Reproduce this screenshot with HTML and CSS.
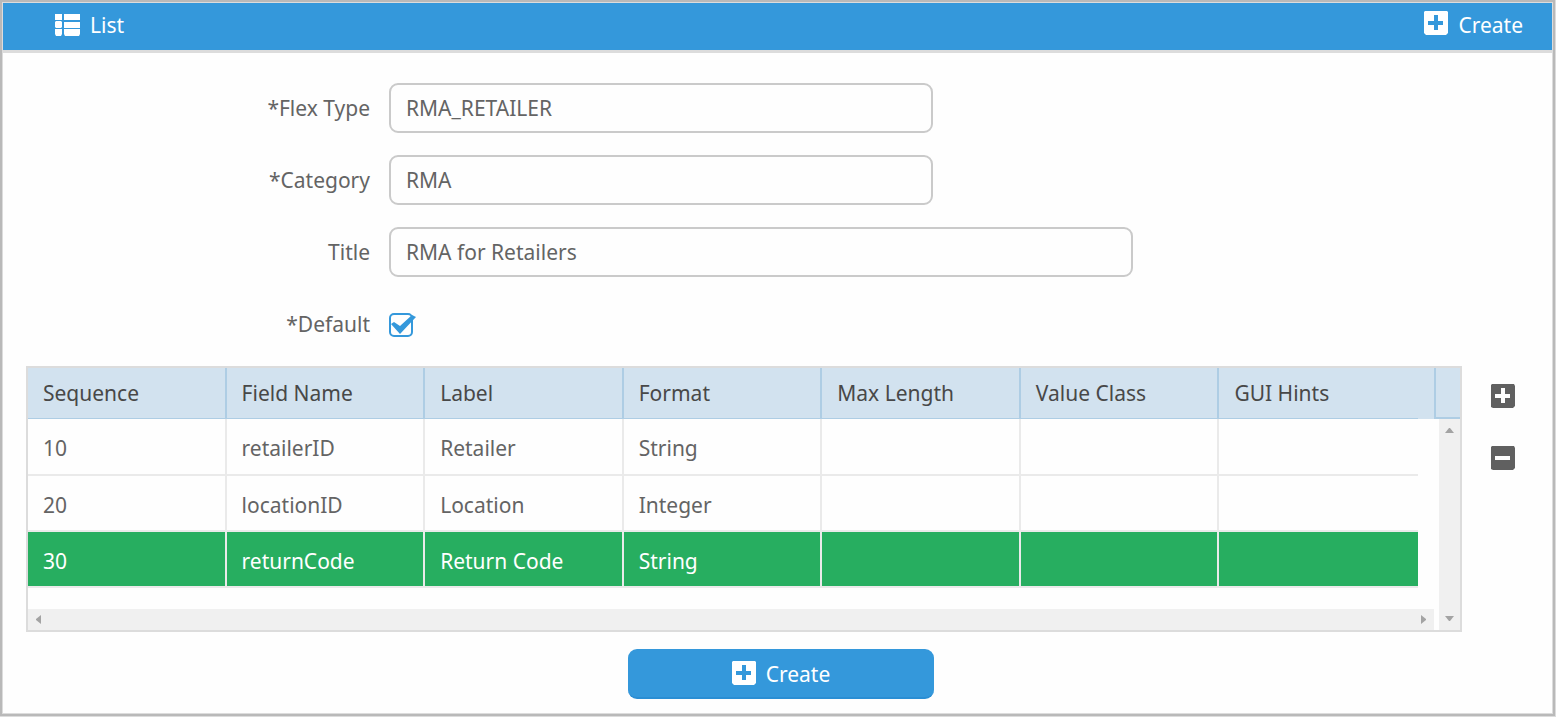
FILE: index.html
```html
<!DOCTYPE html>
<html lang="en">
<head>
<meta charset="utf-8">
<title>Flex Type</title>
<link rel="stylesheet" href="styles.css">
</head>
<body>
<div class="frame">
  <div class="page">
    <header class="toolbar">
      <button class="tool" type="button">
        <svg class="icon-list" width="25" height="22" viewBox="0 0 25 22" fill="currentColor" aria-hidden="true">
          <path d="M0 0h7v6H0zM9 0h16v6H9zM1 7h5l1 1v5l-1 1H1l-1-1V8zM9 8h16v6H9zM0 15h7v5l-1 2H1l-1-2zM9 15h16v5l-1 2H10l-1-2z"/>
        </svg>
        <span>List</span>
      </button>
      <button class="tool" type="button">
        <svg class="icon-box" width="24" height="24" viewBox="0 0 24 24" fill="currentColor" fill-rule="evenodd" aria-hidden="true">
          <path d="M1 0h22l1 1v21l-2 2H2l-2-2V1zM10 4v6H4v4h6v5h4v-5h5v-4h-5V4z"/>
        </svg>
        <span>Create</span>
      </button>
    </header>

    <form class="content">
      <div class="field">
        <label class="field-label" for="flex-type">*Flex Type</label>
        <input class="text-box" id="flex-type" type="text" value="RMA_RETAILER">
      </div>
      <div class="field">
        <label class="field-label" for="category">*Category</label>
        <input class="text-box" id="category" type="text" value="RMA">
      </div>
      <div class="field">
        <label class="field-label" for="title">Title</label>
        <input class="text-box text-box-wide" id="title" type="text" value="RMA for Retailers">
      </div>
      <div class="field">
        <label class="field-label" for="default">*Default</label>
        <div class="check">
          <input class="check-input" id="default" type="checkbox" checked>
          <svg class="check-mark" width="28" height="24" viewBox="0 0 28 24" fill="#3498db" aria-hidden="true">
            <path d="M2 11l3-2 6 4L23 2l4 2-16 17z"/>
          </svg>
        </div>
      </div>

      <div class="grid-row">
        <div class="grid-panel">
          <div class="grid-main">
            <table class="grid">
              <thead>
                <tr><th>Sequence</th><th>Field Name</th><th>Label</th><th>Format</th><th>Max Length</th><th>Value Class</th><th>GUI Hints</th></tr>
              </thead>
              <tbody>
                <tr><td>10</td><td>retailerID</td><td>Retailer</td><td>String</td><td></td><td></td><td></td></tr>
                <tr><td>20</td><td>locationID</td><td>Location</td><td>Integer</td><td></td><td></td><td></td></tr>
                <tr class="selected"><td>30</td><td>returnCode</td><td>Return Code</td><td>String</td><td></td><td></td><td></td></tr>
              </tbody>
            </table>
          </div>
          <div class="head-filler"></div>
          <div class="head-corner"></div>
          <div class="scroll-v">
            <svg width="9" height="5" viewBox="0 0 9 5" fill="#a3a3a3" aria-hidden="true"><path d="M0 5l4-5h1l4 5z"/></svg>
            <svg width="9" height="5" viewBox="0 0 9 5" fill="#a3a3a3" aria-hidden="true"><path d="M0 0h9L5 5H4z"/></svg>
          </div>
          <div class="scroll-h">
            <svg width="5" height="9" viewBox="0 0 5 9" fill="#a3a3a3" aria-hidden="true"><path d="M5 0v9L0 5V4z"/></svg>
            <svg width="5" height="9" viewBox="0 0 5 9" fill="#a3a3a3" aria-hidden="true"><path d="M0 0l5 4v1L0 9z"/></svg>
          </div>
        </div>
        <div class="row-tools">
          <button class="row-tool" type="button" aria-label="Add row">
            <svg width="24" height="24" viewBox="0 0 24 24" fill="currentColor" fill-rule="evenodd" aria-hidden="true">
              <path d="M1 0h22l1 2v20l-2 2H2l-2-1V1zM10 4v6H4v4h6v5h4v-5h5v-4h-5V4z"/>
            </svg>
          </button>
          <button class="row-tool" type="button" aria-label="Remove row">
            <svg width="24" height="24" viewBox="0 0 24 24" fill="currentColor" fill-rule="evenodd" aria-hidden="true">
              <path d="M1 0h22l1 2v20l-2 2H2l-2-1V1zM4 10v4h15v-4z"/>
            </svg>
          </button>
        </div>
      </div>

      <div class="actions">
        <button class="primary" type="button">
          <svg class="icon-box" width="24" height="24" viewBox="0 0 24 24" fill="currentColor" fill-rule="evenodd" aria-hidden="true">
            <path d="M1 0h22l1 1v21l-2 2H2l-2-2V1zM10 4v6H4v4h6v5h4v-5h5v-4h-5V4z"/>
          </svg>
          <span>Create</span>
        </button>
      </div>
    </form>
  </div>
</div>
</body>
</html>
```
FILE: styles.css
```css
* { box-sizing: border-box; }

body {
  margin: 0;
  background: #dcdcdc;
  color: #646464;
  font-family: "Noto Sans", "Open Sans", sans-serif;
  font-size: 21px;
  line-height: 30px;
}

button, input { font: inherit; color: inherit; }

.frame {
  display: flex;
  min-height: 100vh;
  padding: 0 1px 1px 0;
}

.page {
  flex: 1;
  min-width: 0;
  border: 2px solid #b9b9b9;
  outline: 1px solid #dcdcdc;
  outline-offset: -3px;
  padding: 1px;
  background: #fefefe;
}

.toolbar {
  display: flex;
  justify-content: space-between;
  height: 50px;
  padding: 0 29px 0 52px;
  border-bottom: 3px solid #dcdcdc;
  background: #3498db;
  color: #fff;
}

.tool {
  display: flex;
  align-items: center;
  gap: 10px;
  padding: 0 0 4px;
  border: 0;
  background: none;
}

.icon-box { margin-bottom: 3px; }

.content { padding: 30px 0 14px; }

.field {
  display: grid;
  grid-template-columns: 386fr 544fr 200fr 419fr;
  align-items: center;
  height: 50px;
  margin-bottom: 22px;
}

.field-label {
  padding-right: 19px;
  text-align: right;
}

.text-box {
  width: 100%;
  height: 50px;
  padding: 0 15px;
  border: 2px solid #cacaca;
  border-radius: 9px;
  background: #fefefe;
  outline: 0;
}

.text-box-wide { grid-column: 2 / 4; }

.check {
  position: relative;
  margin-top: 2px;
}

.check-input {
  display: block;
  appearance: none;
  width: 24px;
  height: 24px;
  margin: 0;
  border: 2px solid #3498db;
  border-radius: 5px;
}

.check-mark {
  position: absolute;
  top: 0;
  left: 0;
  pointer-events: none;
}

.check-input:not(:checked) + .check-mark { display: none; }

.grid-row {
  display: flex;
  gap: 29px;
  margin-top: -5px;
  padding: 0 37px 0 23px;
}

.grid-panel {
  flex: 1;
  min-width: 0;
  display: grid;
  grid-template-columns: 1fr 16px 5px 21px;
  grid-template-rows: 51px 1fr 21px;
  border: 2px solid #dcdcdc;
}

.grid-main {
  grid-area: 1 / 1 / 3 / 2;
  padding-bottom: 21px;
}

.grid {
  width: 100%;
  table-layout: fixed;
  border-spacing: 0;
}

.grid th,
.grid td {
  padding: 0 0 0 15px;
  text-align: left;
}

.grid th {
  height: 51px;
  border-right: 2px solid #aecde4;
  border-bottom: 1px solid #aecde4;
  background: #d2e2ef;
  color: #484848;
  font-weight: 400;
}

.grid td {
  height: 56px;
  padding-top: 3px;
  border-right: 2px solid #eaeaea;
  border-bottom: 2px solid #eaeaea;
}

.grid tbody tr:first-child td { height: 57px; }

.grid th:last-child,
.grid td:last-child { border-right: 0; }

.selected td {
  background: #27ae60;
  background-clip: padding-box;
  color: #fff;
}

.head-filler {
  grid-area: 1 / 2;
  background: #d2e2ef;
}

.head-corner {
  grid-area: 1 / 3 / 2 / 5;
  border-left: 2px solid #aecde4;
  border-bottom: 2px solid #aecde4;
  background: #d2e2ef;
}

.scroll-v,
.scroll-h {
  display: flex;
  align-items: center;
  justify-content: space-between;
  background: #f0f0f0;
}

.scroll-v {
  grid-area: 2 / 4 / 4 / 5;
  flex-direction: column;
  padding: 9px 0;
}

.scroll-h {
  grid-area: 3 / 1 / 4 / 3;
  padding: 0 8px;
}

.row-tools {
  display: flex;
  flex-direction: column;
  gap: 38px;
  padding-top: 18px;
}

.row-tool {
  display: block;
  height: 24px;
  padding: 0;
  border: 0;
  background: none;
  color: #606060;
}

.row-tool svg { display: block; }

.actions {
  display: flex;
  justify-content: center;
  padding: 17px 16px 0 23px;
}

.primary {
  display: flex;
  align-items: center;
  justify-content: center;
  gap: 10px;
  min-width: 306px;
  height: 50px;
  padding: 2px 0 0;
  border: 0;
  border-bottom: 2px solid #2a8ed4;
  border-radius: 9px;
  background: #3498db;
  color: #fff;
}
```
